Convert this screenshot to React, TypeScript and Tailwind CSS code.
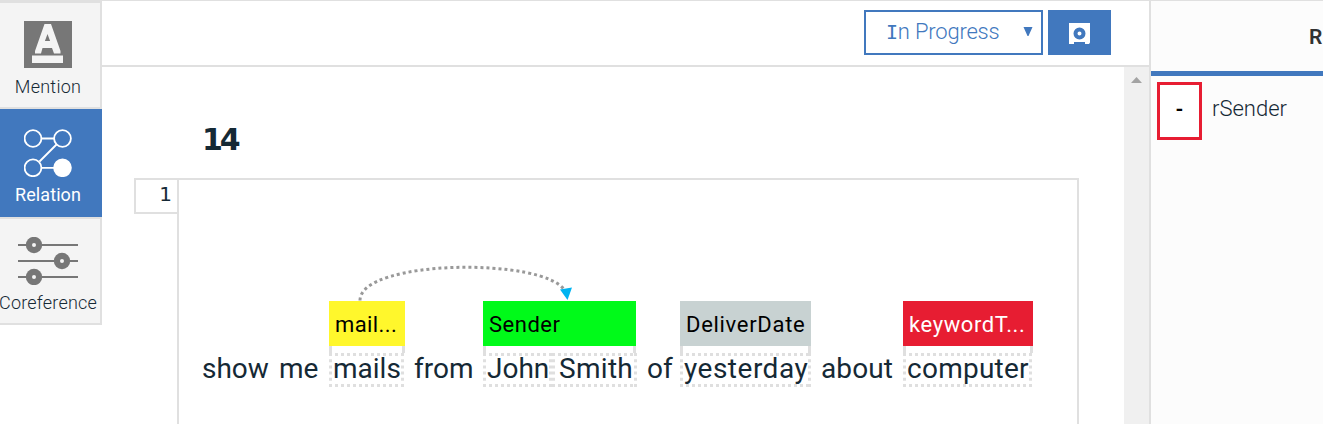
import type { ReactNode } from 'react';

function MentionIcon() {
  return (
    <svg width="48" height="48" viewBox="0 0 48 48">
      <rect width="48" height="47" fill="#777777" />
      <path fillRule="evenodd" fill="#f4f4f4" d="M20.5 3h6.5L36.5 30v2.5h-6.5L28 27h-9.5L17 32.5h-6V30zM23.5 13l-2.6 7h5.2z" />
      <rect x="8" y="34.5" width="31" height="7.5" fill="#f4f4f4" />
    </svg>
  );
}

function RelationIcon() {
  return (
    <svg width="48" height="48" viewBox="0 0 48 48" fill="none" stroke="#fff" strokeWidth="1.8">
      <circle cx="9" cy="9.5" r="8.4" />
      <circle cx="38.5" cy="9.5" r="8.4" />
      <circle cx="9" cy="38.8" r="8.4" />
      <circle cx="38.5" cy="38.8" r="8.4" fill="#fff" />
      <path d="M17.5 9.5H30M17.5 38.8H30M15.5 32.5L32.5 15.5" />
    </svg>
  );
}

function CoreferenceIcon() {
  return (
    <svg width="60" height="48" viewBox="0 0 60 48">
      <path d="M0 8h60M0 24h60M0 40h60" stroke="#777777" strokeWidth="2" />
      {[[16, 8], [44, 24], [16, 40]].map(([x, y]) => (
        <g key={y}>
          <circle cx={x} cy={y} r="8.2" fill="#777777" />
          <circle cx={x} cy={y} r="2" fill="#f4f4f4" />
        </g>
      ))}
    </svg>
  );
}

function NavItem({ icon, label, className }: { icon: ReactNode; label: string; className: string }) {
  return (
    <div className={`flex flex-col items-center ${className}`}>
      {icon}
      <div className="mt-[6px] whitespace-nowrap text-[18px] leading-[24px]">{label}</div>
    </div>
  );
}

function DottedBox() {
  return (
    <svg className="absolute inset-0 h-full w-full" stroke="#dfdfdf" strokeWidth="3" strokeDasharray="3 3">
      <line x1="0" y1="1.5" x2="100%" y2="1.5" />
      <line x1="0" y1="32.5" x2="100%" y2="32.5" />
      <line x1="1.5" y1="0" x2="1.5" y2="34" strokeDasharray="3 3.2" />
      <line x1="100%" y1="0" x2="100%" y2="34" strokeDasharray="3 3.2" transform="translate(-1.5 0)" />
    </svg>
  );
}

function Word({ className, children }: { className: string; children: string }) {
  return <span className={`mb-[2px] shrink-0 whitespace-nowrap ${className}`}>{children}</span>;
}

function Mention({ box, tag, label, children }: { box: string; tag: string; label: string; children: ReactNode }) {
  return (
    <div className={`shrink-0 ${box}`}>
      <div className={`h-[45px] whitespace-nowrap pl-[6px] text-[22px] leading-[47px] ${tag}`}>{label}</div>
      <div className="h-[7px] border-x-[3px] border-[#dfdfdf]" />
      <div className="flex h-[34px] leading-[32px]">{children}</div>
    </div>
  );
}

function Token({ className, text }: { className: string; text: string }) {
  return (
    <div className={`relative shrink-0 whitespace-nowrap ${className}`}>
      <DottedBox />
      <span>{text}</span>
    </div>
  );
}

export default function App() {
  return (
    <div className="flex h-[424px] w-[1323px] overflow-hidden bg-white font-['Roboto',sans-serif] text-[#152935]">
      <nav className="w-[102px] shrink-0">
        <NavItem
          icon={<MentionIcon />}
          label="Mention"
          className="h-[109px] border-b-2 border-r-2 border-t-[3px] border-[#e0e0e0] bg-[#f4f4f4] pr-1 pt-[18px] font-[350] tracking-[0.25px]"
        />
        <NavItem icon={<RelationIcon />} label="Relation" className="h-[108px] bg-[#4178be] pr-[6px] pt-5 tracking-[0.1px] text-white" />
        <NavItem
          icon={<CoreferenceIcon />}
          label="Coreference"
          className="h-[108px] border-y-2 border-r-2 border-[#e0e0e0] bg-[#f4f4f4] pr-1 pt-[18px] font-[350] tracking-[0.2px]"
        />
      </nav>

      <main className="flex w-[1047px] shrink-0 flex-col border-t border-[#e0e0e0]">
        <header className="flex h-[66px] shrink-0 justify-end gap-[5px] border-b-2 border-[#e0e0e0] pr-[38px] pt-[9px]">
          <div className="flex h-[45px] w-[179px] items-center justify-between border-2 border-[#4178be] pb-[2px] pl-[20px] pr-2 text-[#4178be]">
            <span className="whitespace-nowrap text-[22px] font-[350] tracking-[-0.2px]"><span className="font-['DejaVu_Sans_Mono',monospace] text-[20px] font-light">I</span>n Progress</span>
            <svg width="10" height="9" viewBox="0 0 10 9" fill="#4178be"><path d="M.5 0h9L5.5 9h-1z" /></svg>
          </div>
          <button className="flex h-[45px] w-[63px] items-center justify-center bg-[#4178be]">
            <svg width="21" height="21" viewBox="0 0 21 21" className="mt-[1px]">
              <path d="M0 0h21v19.5l-1 1.5h-4v-2H5v2H0z" fill="#fff" />
              <circle cx="10.5" cy="10.5" r="4" fill="none" stroke="#4178be" strokeWidth="4" />
            </svg>
          </button>
        </header>

        <div className="flex min-h-0 flex-1">
          <section className="w-[1022px] shrink-0 pl-8 pt-[55px]">
            <h1 className="h-[56px] pl-[68px] font-['DejaVu_Sans',sans-serif] text-[30px] font-bold leading-[36px] tracking-[-3px]">14</h1>
            <div className="flex h-[246px]">
              <div className="h-[36px] w-[43px] shrink-0 border-2 border-r-0 border-[#e0e0e0] pr-[5px] text-right font-['DejaVu_Sans',sans-serif] text-[20px] leading-[29px]">1</div>
              <div className="w-[902px] shrink-0 border-x-2 border-t-2 border-[#e0e0e0] pl-[23px] pt-[86px]">
                <svg width="240" height="35" viewBox="342 266 240 35" className="ml-[140px] overflow-visible">
                  <path d="M360 300.5C360 259 546 257 565 291" fill="none" stroke="#999" strokeWidth="3" strokeDasharray="3 3" />
                  <path d="M560 289.5l12-2-4.5 12.5z" fill="#00b4f1" />
                </svg>
                <div className="flex items-end text-[28px] font-[370] leading-[32px]">
                  <Word className="w-[77px]">show</Word>
                  <Word className="w-[50px]">me</Word>
                  <Mention box="w-[76px]" tag="bg-[#fff72c] text-black tracking-[0.4px]" label="mail...">
                    <Token className="w-[75px] pl-1" text="mails" />
                  </Mention>
                  <Word className="ml-[9px] w-[69px]">from</Word>
                  <Mention box="w-[153px]" tag="bg-[#00fa19] text-black tracking-[0.5px]" label="Sender">
                    <Token className="w-[69px] pl-1" text="John" />
                    <Token className="w-[85px] pl-[7px] tracking-[0.3px]" text="Smith" />
                  </Mention>
                  <Word className="ml-[11px] w-[33px]">of</Word>
                  <Mention box="w-[131px]" tag="bg-[#c8d2d2] text-black tracking-[0.7px]" label="DeliverDate">
                    <Token className="w-[131px] pl-1 tracking-[0.5px]" text="yesterday" />
                  </Mention>
                  <Word className="ml-[10px] w-[82px] tracking-[0.1px]">about</Word>
                  <Mention box="w-[130px]" tag="bg-[#e71d32] text-white font-normal tracking-[0.6px]" label="keywordT...">
                    <Token className="w-[129px] pl-1 tracking-[0.25px]" text="computer" />
                  </Mention>
                </div>
              </div>
            </div>
          </section>
          <div className="flex w-[25px] shrink-0 justify-center bg-[#f0f0f0] pt-[10px]">
            <svg width="11" height="6" viewBox="0 0 11 6"><path d="M5.5 0L11 6H0z" fill="#a3a3a3" /></svg>
          </div>
        </div>
      </main>

      <aside className="w-[174px] shrink-0 border-l-2 border-t border-[#e0e0e0] bg-[#fcfcfc]">
        <div className="h-[75px] overflow-hidden whitespace-nowrap border-b-[5px] border-[#4178be] pl-[158px] pt-[20px] text-[21px] font-semibold leading-[32px] text-[#323232]">R</div>
        <div className="flex items-start pl-[6px] pt-[6px]">
          <div className="flex h-[58px] w-[45px] items-center justify-center border-[3px] border-[#e71d32] bg-white pb-1 text-[20px] font-bold text-black">-</div>
          <span className="ml-[10px] mt-[11px] text-[22px] font-[350] leading-[32px]">rSender</span>
        </div>
      </aside>
    </div>
  );
}
